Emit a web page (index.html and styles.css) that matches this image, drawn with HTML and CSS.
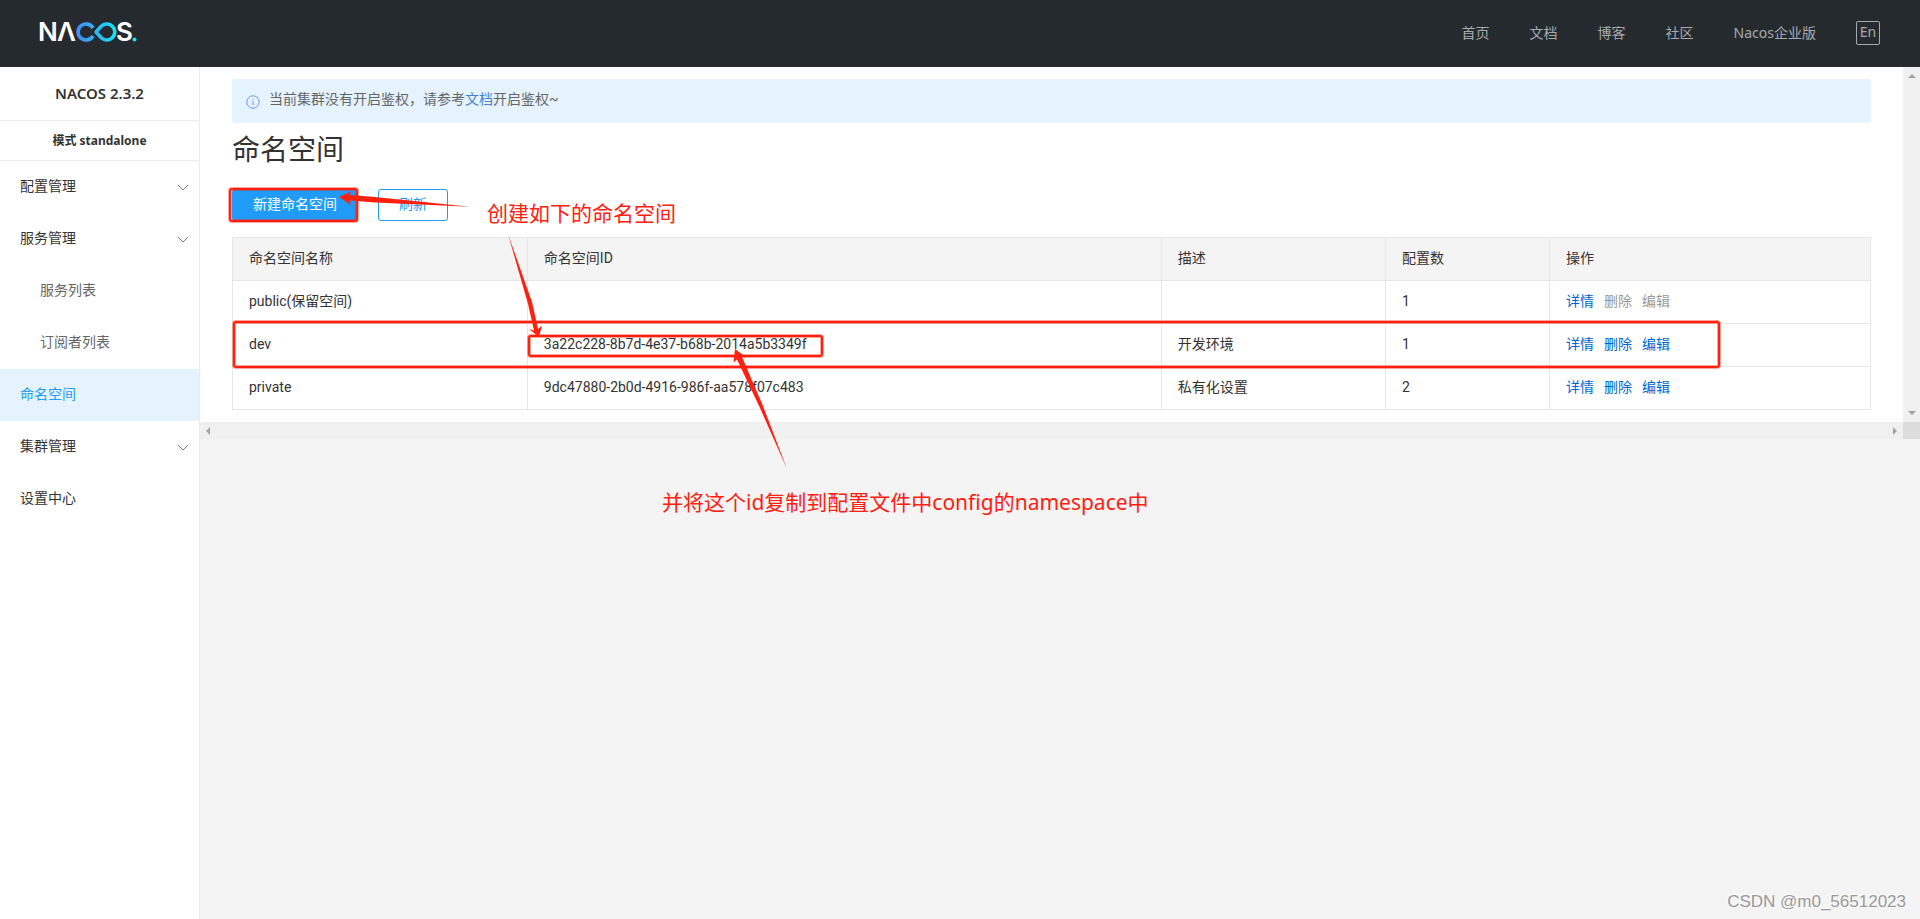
FILE: index.html
```html
<!DOCTYPE html>
<html lang="zh-CN">
<head>
<meta charset="utf-8">
<title>Nacos</title>
<link rel="stylesheet" href="styles.css">
</head>
<body>
<header class="topbar">
  <a class="logo" href="#" aria-label="Nacos">
    <svg width="106" height="36" viewBox="-4 -6 106 36" aria-hidden="true">
      <defs>
        <linearGradient id="loop" gradientUnits="userSpaceOnUse" x1="36" y1="0" x2="76" y2="0">
          <stop offset="0" stop-color="#4489ff"/>
          <stop offset="1" stop-color="#17e3f2"/>
        </linearGradient>
      </defs>
      <text class="logo-text" x="-2" y="21">N</text>
      <text class="logo-text" x="17" y="21">Λ</text>
      <path d="M53 8 A8 8 0 1 0 53 16 M56 12 L61.500 6 A8 8 0 1 1 61.500 18 Z" fill="none" stroke="url(#loop)" stroke-width="3.600" stroke-linejoin="round"/>
      <text class="logo-text" x="76" y="21">S</text>
      <circle cx="94.500" cy="19.500" r="2" fill="#17e3f2"/>
    </svg>
  </a>
  <nav class="topnav">
    <a href="#">首页</a>
    <a href="#">文档</a>
    <a href="#">博客</a>
    <a href="#">社区</a>
    <a href="#">Nacos企业版</a>
    <button class="lang" type="button">En</button>
  </nav>
</header>
<div class="shell">
  <aside class="sidebar">
    <div class="version">NACOS 2.3.2</div>
    <div class="mode">模式 standalone</div>
    <nav class="menu">
      <a class="item" href="#">配置管理<svg class="chevron" viewBox="0 0 12 8"><path d="M1 1 L6 6 L11 1"/></svg></a>
      <a class="item" href="#">服务管理<svg class="chevron" viewBox="0 0 12 8"><path d="M1 1 L6 6 L11 1"/></svg></a>
      <a class="item sub" href="#">服务列表</a>
      <a class="item sub" href="#">订阅者列表</a>
      <a class="item active" href="#">命名空间</a>
      <a class="item" href="#">集群管理<svg class="chevron" viewBox="0 0 12 8"><path d="M1 1 L6 6 L11 1"/></svg></a>
      <a class="item" href="#">设置中心</a>
    </nav>
  </aside>
  <div class="viewport">
    <main class="content">
      <div class="notice">
        <svg class="info" viewBox="0 0 14 14"><circle cx="7" cy="7" r="6.200"/><path d="M7 6 V10 M7 4 V5"/></svg>
        <p>当前集群没有开启鉴权，请参考<a href="#">文档</a>开启鉴权~</p>
      </div>
      <h1>命名空间</h1>
      <div class="actions">
        <button class="btn primary" type="button">新建命名空间</button>
        <button class="btn" type="button">刷新</button>
      </div>
      <table class="grid">
        <colgroup><col class="c-name"><col class="c-id"><col class="c-desc"><col class="c-count"><col class="c-ops"></colgroup>
        <thead>
          <tr><th>命名空间名称</th><th>命名空间ID</th><th>描述</th><th>配置数</th><th>操作</th></tr>
        </thead>
        <tbody>
          <tr><td>public(保留空间)</td><td></td><td></td><td>1</td><td><div class="ops"><a href="#">详情</a><span>删除</span><span>编辑</span></div></td></tr>
          <tr><td>dev</td><td>3a22c228-8b7d-4e37-b68b-2014a5b3349f</td><td>开发环境</td><td>1</td><td><div class="ops"><a href="#">详情</a><a href="#">删除</a><a href="#">编辑</a></div></td></tr>
          <tr><td>private</td><td>9dc47880-2b0d-4916-986f-aa578f07c483</td><td>私有化设置</td><td>2</td><td><div class="ops"><a href="#">详情</a><a href="#">删除</a><a href="#">编辑</a></div></td></tr>
        </tbody>
      </table>
    </main>
    <div class="vbar"><i class="tri up"></i><i class="tri down"></i></div>
    <div class="hbar"><i class="tri left"></i><i class="tri right"></i></div>
    <div class="corner"></div>
  </div>
</div>
<svg class="marks" width="1920" height="919" viewBox="0 0 1920 919" aria-hidden="true">
  <g class="halo">
    <rect x="230" y="189" width="127" height="32" rx="2"/>
    <rect x="234" y="322" width="1485" height="45" rx="2"/>
    <rect x="529" y="336" width="293" height="20" rx="2"/>
  </g>
  <g class="frame">
    <rect x="230" y="189" width="127" height="32" rx="2"/>
    <rect x="234" y="322" width="1485" height="45" rx="2"/>
    <rect x="529" y="336" width="293" height="20" rx="2"/>
  </g>
  <g class="arrow">
    <path d="M339 197 L351 191.500 L349.500 195 L375 197 L470 206.700 L375 202.500 L349.500 200.500 L351 205 Z"/>
    <path d="M539 337 L529 329 L534 330.500 L528 304 L508 234 L532 302 L538 329 L542 325.500 Z"/>
    <path d="M735 349 L733.500 362.500 L737 359.500 L760 408 L787 469 L763 406 L742 357 L746.500 357.500 Z"/>
  </g>
</svg>
<p class="note note-create">创建如下的命名空间</p>
<p class="note note-copy">并将这个id复制到配置文件中config的namespace中</p>
<p class="watermark">CSDN @m0_56512023</p>
</body>
</html>
```

FILE: styles.css
```css
* { box-sizing: border-box; }

body {
  margin: 0;
  min-height: 100vh;
  display: flex;
  flex-direction: column;
  background: #f4f4f4;
  color: #333;
  font: 14px/20px Roboto, "Noto Sans CJK SC", sans-serif;
}

a { color: inherit; text-decoration: none; }
p { margin: 0; }

.topbar {
  height: 67px;
  padding: 0 40px 0 36px;
  display: flex;
  align-items: center;
  justify-content: space-between;
  background: #252a2f;
}
.logo { display: flex; }
.logo svg { display: block; margin-bottom: 4px; }
.logo-text { font: 600 26px Inter, sans-serif; fill: #fff; }

.topnav {
  display: flex;
  align-items: center;
  gap: 40px;
  padding-bottom: 2px;
  color: #a7aaac;
  font-family: "Noto Sans", "Noto Sans CJK SC", sans-serif;
}
.lang {
  width: 24px;
  height: 24px;
  padding: 0 0 2px;
  border: 1px solid #a7aaac;
  border-radius: 2px;
  background: none;
  color: inherit;
  font: 14px/20px "Noto Sans", sans-serif;
}

.shell { flex: 1; display: flex; align-items: stretch; }

.sidebar {
  width: 200px;
  flex: none;
  background: #fff;
  border-right: 1px solid #ebebeb;
}
.version, .mode {
  display: flex;
  align-items: center;
  justify-content: center;
  border-bottom: 1px solid #ebebeb;
  font-family: "Noto Sans", "Noto Sans CJK SC", sans-serif;
  font-weight: 700;
}
.version { height: 54px; padding-bottom: 2px; font-size: 15px; font-weight: 600; }
.mode { height: 40px; font-size: 12px; }
.item {
  height: 52px;
  padding: 0 10px 2px 20px;
  display: flex;
  align-items: center;
  justify-content: space-between;
}
.item.sub { padding-left: 40px; color: #666; }
.item.active { background: #e4f3fe; color: #209bfa; }
.chevron {
  width: 12px;
  height: 8px;
  margin-top: 4px;
  fill: none;
  stroke: #777;
}

.viewport {
  flex: 1;
  display: grid;
  grid-template-columns: 1fr 17px;
  grid-template-rows: auto 17px;
  align-content: start;
}
.content { padding: 12px 32px; background: #fff; }
.vbar, .hbar {
  display: flex;
  justify-content: space-between;
  align-items: center;
  background: #f0f0f0;
}
.vbar { flex-direction: column; padding: 7px 0; }
.hbar { padding: 0 6px; }
.corner { background: #dcdcdc; }
.tri { border: 4px solid transparent; }
.tri.up { border-top: 0; border-bottom-color: #a3a3a3; }
.tri.down { border-bottom: 0; border-top-color: #a3a3a3; }
.tri.left { border-left: 0; border-right-color: #a3a3a3; }
.tri.right { border-right: 0; border-left-color: #a3a3a3; }

.notice {
  height: 44px;
  padding: 0 14px 4px;
  display: flex;
  align-items: center;
  gap: 9px;
  border-radius: 3px;
  background: #e4f3fe;
  color: #666;
}
.notice a { color: #4a80d0; }
.info {
  width: 14px;
  height: 14px;
  margin-top: 6px;
  fill: none;
  stroke: #6c94fa;
}

h1 {
  margin: 8px 0 18px;
  font-size: 28px;
  font-weight: 400;
  line-height: 40px;
}

.actions { display: flex; gap: 20px; margin-bottom: 16px; }
.btn {
  height: 32px;
  padding: 0 20px 2px;
  border: 1px solid #209bfa;
  border-radius: 3px;
  background: #fff;
  color: #209bfa;
  font: inherit;
}
.btn.primary { background: #209bfa; color: #fff; }

.grid {
  width: 100%;
  table-layout: fixed;
  border-collapse: collapse;
}
.c-name { width: 18%; }
.c-id { width: 38.7%; }
.c-desc { width: 13.7%; }
.c-count { width: 10%; }
.grid th, .grid td {
  height: 43px;
  padding: 0 16px 2px;
  border: 1px solid #e6e6e6;
  text-align: left;
  font-weight: 400;
}
.grid th { background: #f4f4f4; }
.ops { display: flex; gap: 10px; color: #999; }
.ops a { color: #0066d0; }

/* Annotations drawn over the page */
.marks {
  position: absolute;
  left: 0;
  top: 0;
  pointer-events: none;
}
.halo rect { fill: none; stroke: #ff2010; stroke-opacity: .4; stroke-width: 4; }
.frame rect { fill: none; stroke: #ff2010; stroke-width: 2; }
.arrow path { fill: #ff2010; }
.note {
  position: absolute;
  color: #ff2010;
  font: 21px/30px "Noto Sans", "Noto Sans CJK SC", sans-serif;
  white-space: nowrap;
}
.note-create { left: 487px; top: 198px; }
.note-copy { left: 662px; top: 487px; }
.watermark {
  position: absolute;
  right: 14px;
  bottom: 7px;
  color: #999;
  font: 17px/20px "Liberation Sans", sans-serif;
  text-shadow: -1px -1px 0 #fff;
}
```
